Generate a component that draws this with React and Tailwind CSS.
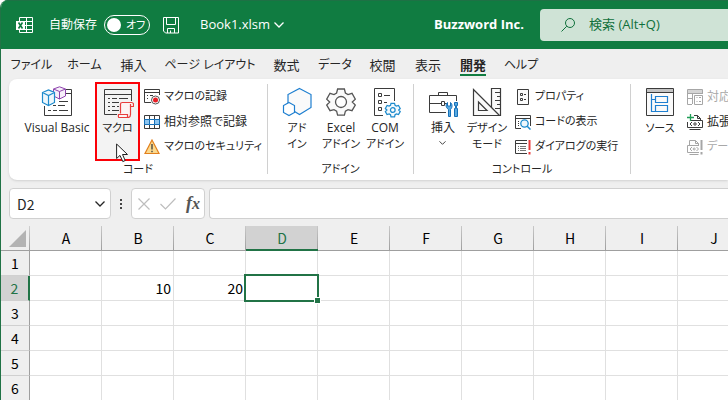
import React, { useState } from 'react';

const COLUMNS = ['A', 'B', 'C', 'D', 'E', 'F', 'G', 'H', 'I', 'J'];
const ROWS = [1, 2, 3, 4, 5, 6];
const VALUES = { B2: 10, C2: 20 };

const TABS = [
  { label: 'ファイル', style: 'w-[55px] text-xs' },
  { label: 'ホーム', style: 'w-[51px] text-xs' },
  { label: '挿入', style: 'w-[47px] text-[13px]' },
  { label: 'ページ レイアウト', style: 'w-[106px] text-xs' },
  { label: '数式', style: 'w-[47px] text-[13px]' },
  { label: 'データ', style: 'w-[50px] text-xs' },
  { label: '校閲', style: 'w-[45px] text-[13px]' },
  { label: '表示', style: 'w-[46px] text-[13px]' },
  { label: '開発', style: 'w-[44px] text-[13px]' },
  { label: 'ヘルプ', style: 'w-[52px] text-xs' }
];

const Icon = ({ size = 16, children, className = '' }) => (
  <svg
    width={size}
    height={size}
    viewBox={`0 0 ${size} ${size}`}
    fill="none"
    stroke="#3b3b3b"
    className={`shrink-0 ${className}`}
    aria-hidden="true"
  >
    {children}
  </svg>
);

const Chevron = ({ className = '' }) => (
  <svg width="10" height="6" viewBox="0 0 10 6" fill="none" stroke="currentColor" strokeWidth="1.3" className={className} aria-hidden="true">
    <path d="M.5.5 5 5 9.5.5" />
  </svg>
);

const GEAR =
  'M10.6 1.5h6.8l1 4 2.6 1.5 4-1.2 3.3 5.8-3 2.9 3 3-3.3 5.7-4-1.1-2.6 1.5-1 4h-6.8l-1-4L7 22.1l-4 1.1L-.3 17.5l3-3-3-2.9L3 5.8 7 7l2.6-1.5z';

const VisualBasicIcon = () => (
  <Icon size={32}>
    <path d="M3.5 20V29.5H30.5V3.5H25M24 7.5H30" />
    <path d="M18 15.5H27M12 19.5H15M17 19.5H24M7 24.5H10M12 24.5H16M18 24.5H27" />
    <g stroke="#8e44ad" fill="#f7effa">
      <path d="M12.5 3 18.5.8 24.5 3V10L18.5 13 12.5 10z" />
      <path d="M12.5 3 18.5 5.5 24.5 3M18.5 5.5V13" />
    </g>
    <g stroke="#1e8bcd" strokeWidth="1.2" fill="#eef7fc">
      <path d="M1.5 6.5 7.5 4 13.5 6.5V16.5L7.5 19.5 1.5 16.5z" />
      <path d="M1.5 6.5 7.5 9.5 13.5 6.5M7.5 9.5V19.5" />
    </g>
  </Icon>
);

const MacroIcon = () => (
  <Icon size={32}>
    <path d="M15 28.5H2.5V3.5H29.5V15M2.5 8.5H29.5" />
    <path d="M6 12.5H8M10 12.5H15M17 12.5H26M6 16.5H8M10 16.5H17M6 20.5H8M10 20.5H13M15 20.5H17M6 24.5H8M10 24.5H17" />
    <g stroke="#e83c3c" strokeWidth="1.2" fill="#fdf3f3">
      <path d="M18.5 27.5V18C18.5 16.5 19 16.5 20.5 16.5H29.5C31 16.5 31.5 17.5 31.5 18.5V20.5H28.5V28.5C28.5 30.5 28 31.5 26 31.5H17C16 31.5 16.5 29 16.5 28.5H25.5V31" />
      <path d="M28.5 20.5V18" />
    </g>
  </Icon>
);

const AddInIcon = () => (
  <Icon size={32}>
    <g stroke="#1e7fd0" strokeWidth="1.2" fill="#fafafa">
      <path d="M18.5 2.5 30 8.5V21.5L18.5 28.5 7 21.5V8.5z" />
      <path d="M8 16.5 13.5 19.5V26.5L8 29.5 2.5 26.5V19.5z" fill="#fff" />
    </g>
  </Icon>
);

const ExcelAddInIcon = () => (
  <Icon size={32}>
    <g transform="translate(2 1.5)" stroke="#555" strokeWidth="1.3" fill="#fafafa">
      <path d={GEAR} />
      <circle cx="14" cy="14.5" r="5.5" fill="#fff" />
    </g>
  </Icon>
);

const ComAddInIcon = () => (
  <Icon size={32}>
    <path d="M14 29.5H5.5V2.5H25.5V15" />
    <path d="M9.5 7.5H12.5V10.5H9.5zM9.5 14.5H12.5V17.5H9.5zM9.5 21.5H12.5V24.5H9.5zM15 9.5H21M15 16.5H18" />
    <g transform="translate(16.5 16.5) scale(.52)" stroke="#1e8bcd" strokeWidth="2.4" fill="#f2f9fd">
      <path d={GEAR} />
      <circle cx="14" cy="14.5" r="4.5" fill="#fff" />
    </g>
  </Icon>
);

const ToolboxIcon = () => (
  <Icon size={32}>
    <path d="M19 26.5H2.5V9.5H29.5V15M11.5 9V6.5H20.5V9M2.5 17.5H14M18 17.5H20" />
    <path d="M14.5 15.5H17.5V19.5H14.5z" fill="#fff" />
    <g stroke="#1670b8" fill="#5aaae0">
      <path d="M21.5 30.5V23.5C18.5 21.5 18.5 18 20.5 16.5V20H23.5V16.5C25.5 18 25.5 21.5 23.5 23.5V30.5z" />
      <path d="M27.5 16.5H30.5V19.5H29.5V22.5H30.5V30.5H27.5V22.5H28.5V19.5H27.5z" />
    </g>
  </Icon>
);

const DesignIcon = () => (
  <Icon size={32}>
    <g strokeWidth="1.2" fill="#fafafa">
      <path d="M20.5 22V2.5H29.5V29.5H27" />
      <path d="M2.5 3.5V29.5H28.5z" />
      <path d="M7.5 16V24.5H16z" />
      <path d="M24 6.5H29M26 10.5H29M24 14.5H29M26 18.5H29M24 22.5H29" />
    </g>
  </Icon>
);

const SourceIcon = () => (
  <Icon size={32}>
    <path d="M2.5 2.5H29.5V29.5H2.5z" fill="#fafafa" />
    <path d="M3 3H29V6H3z" fill="#c4c4c4" stroke="none" />
    <path d="M2.5 6.5H29.5" />
    <path d="M7.5 8V25.5H11M7.5 13.5H11M11.5 10.5H23.5V16.5H11.5zM11.5 19.5H23.5V25.5H11.5z" stroke="#1e7fd0" strokeWidth="1.2" fill="none" />
  </Icon>
);

const RecordIcon = () => (
  <Icon>
    <path d="M7 13.5H.5V.5H15.5V6M.5 3.5H15.5M3 6.5H4M6 6.5H9M3 9.5H4" />
    <circle cx="11.5" cy="11" r="4" fill="#fff" stroke="#555" />
    <circle cx="11.5" cy="11" r="2.5" fill="#e81e25" stroke="none" />
  </Icon>
);

const RelativeIcon = () => (
  <Icon>
    <path d="M.5 1.5H15.5V14.5H.5zM5.5 1.5V14.5M10.5 1.5V14.5" fill="#fff" />
    <path d="M.5 5.5H15.5V10.5H.5z" fill="#8cc4ee" stroke="#1670b8" />
    <path d="M5.5 5.5H10.5V10.5H5.5z" fill="#fff" stroke="#1670b8" />
  </Icon>
);

const WarningIcon = () => (
  <Icon>
    <path d="M8 1 15 14.5H1z" fill="#fbd98d" stroke="#e2801e" strokeWidth="1.2" />
    <path d="M8 5V10.5M8 11.8V13.3" strokeWidth="1.3" />
  </Icon>
);

const PropertyIcon = () => (
  <Icon>
    <path d="M2.5.5H13.5V15.5H2.5z" fill="#fafafa" />
    <path d="M5.5 4.5H7.5V6.5H5.5zM5.5 9.5H7.5V11.5H5.5zM9 5.5H11M9 10.5H11" />
  </Icon>
);

const CodeIcon = () => (
  <Icon>
    <path d="M6 14.5H.5V1.5H15.5V12M.5 4.5H15.5M3 7.5H4M3 9.5H4M3 11.5H4" />
    <circle cx="9.5" cy="9.5" r="3.7" fill="#eef7fc" stroke="#1e8bcd" strokeWidth="1.3" />
    <path d="M12.2 12.2 15.5 15.5" stroke="#1e8bcd" strokeWidth="1.5" />
  </Icon>
);

const DialogIcon = () => (
  <Icon>
    <path d="M12 14.5H.5V1.5H12M.5 4.5H12" />
    <path d="M3 7.5H4M5 7.5H11M3 9.5H4M5 9.5H11M3 11.5H4M5 11.5H11" stroke="#777" />
    <path d="M14.5 1V11M14.5 13V15.5" stroke="#e83c3c" strokeWidth="2" />
  </Icon>
);

const MapIcon = () => (
  <Icon>
    <g stroke="#a6a6a6">
      <path d="M5 15.5H.5V.5H15.5V5M.5 4.5H15.5M5.5.5V15M10.5.5V4M.5 9.5H5" />
      <path d="M1 1H15V4H1z" fill="#d5d5d5" stroke="none" />
      <path d="M7.5 6.5H15.5V15.5H7.5zM9.5 8.5H10.5M12 8.5H14M9.5 12.5H10.5M12 12.5H14" />
    </g>
  </Icon>
);

const ExpansionIcon = () => (
  <Icon>
    <path d="M7 1.5H10.5L13.5 4.5V6M10.5 1.5V4.5H13.5M2.5 15.5H13.5" />
    <path d="M3 6.5H15.5V13.5H.5V8" />
    <path d="M5 8 3 10 5 12M11 8 13 10 11 12" />
    <circle cx="8" cy="10" r="1.2" />
    <path d="M3.5 0V7M0 3.5H7" stroke="#1f9d55" strokeWidth="1.3" />
  </Icon>
);

const RefreshIcon = () => (
  <Icon>
    <g stroke="#a6a6a6">
      <path d="M2.5 6V1.5H8.5L11.5 4.5V6M8.5 1.5V4.5H11.5M2.5 15.5H11.5M12 6.5H.5V13.5H12" />
      <path d="M5 8 3 10 5 12M9.5 8 11.5 10 9.5 12" />
      <circle cx="7.2" cy="10" r="1" />
      <path d="M14.5 1V11M14.5 13V15.5" strokeWidth="2" />
    </g>
  </Icon>
);

const LargeButton = ({ icon, lines, width = 'w-11', dropdown = false }) => (
  <button type="button" className={`flex h-[79px] shrink-0 flex-col items-center pt-1 ${width}`}>
    {icon}
    <span className="mt-[2px] flex flex-col items-center whitespace-nowrap">
      {lines.map(line => (
        <span key={line} className={`leading-4 ${/[A-Za-z挿]/.test(line) ? 'text-xs' : 'text-[11px]'}`}>
          {line}
        </span>
      ))}
      {dropdown && <Chevron className="mt-[5px] h-1 w-[7px]" />}
    </span>
  </button>
);

const SmallButton = ({ icon, label, size = 'text-[11px]', disabled = false }) => (
  <button
    type="button"
    disabled={disabled}
    className={`flex h-[25px] items-center gap-1 whitespace-nowrap disabled:text-[#a8a8a8] ${size}`}
  >
    {icon}
    {label}
  </button>
);

const Group = ({ label, width, padding, children }) => (
  <section aria-label={label} className={`flex shrink-0 flex-col ${width}`}>
    <div className={`flex h-[79px] items-start ${padding}`}>{children}</div>
    {label && <div className="text-center text-[11px] leading-4">{label}</div>}
  </section>
);

const Separator = () => <div className="mt-[2px] mb-[3px] w-px shrink-0 bg-[#d0d0d0]" />;

const TitleBar = () => {
  const [autoSave, setAutoSave] = useState(false);

  return (
    <header className="flex h-[49px] shrink-0 items-center border-t border-[#1e7145] bg-[#107c41] pl-[15px] text-white">
      <svg width="17" height="17" viewBox="0 0 17 17" fill="none" stroke="#fff" aria-hidden="true" className="shrink-0">
        <path d="M3.5 4V.5H16.5V15.5H3.5V13M3.5 4.5H16.5M9 8.5H16.5M9 12.5H16.5M10.5.5V15.5" />
        <path d="M0 4H9V13H0z" fill="#fff" stroke="none" />
        <path d="M2.5 5.5 6.5 11.5M6.5 5.5 2.5 11.5" stroke="#107c41" strokeWidth="1.6" />
      </svg>
      <label htmlFor="autosave" className="ml-4 shrink-0 text-xs">自動保存</label>
      <label className="ml-[7px] flex h-5 w-[46px] shrink-0 items-center gap-[5px] rounded-full border border-white pl-[2px]">
        <input
          id="autosave"
          type="checkbox"
          role="switch"
          checked={autoSave}
          onChange={e => setAutoSave(e.target.checked)}
          className="size-[14px] appearance-none rounded-full bg-white"
        />
        <span className="text-[11px]">オフ</span>
      </label>
      <button type="button" aria-label="上書き保存" className="ml-[13px] shrink-0">
        <svg width="16" height="17" viewBox="0 0 16 17" fill="none" stroke="#fff" aria-hidden="true">
          <path d="M.5.5H15.5V16H2.5L.5 14zM3.5.5V7.5H12.5V.5M4.5 16V11.5H11.5V16M7.5 16V13.5" />
        </svg>
      </button>
      <button type="button" className="ml-[21px] flex w-[84px] shrink-0 items-center justify-between whitespace-nowrap text-[13px]">
        Book1.xlsm
        <Chevron />
      </button>
      <div className="ml-[150px] w-[94px] shrink-0 whitespace-nowrap text-[13px] font-bold">Buzzword Inc.</div>
      <label className="ml-3 flex h-8 min-w-0 flex-1 items-center gap-[14px] rounded-l bg-[#cfe3d6] pl-[21px] text-[#0f703b]">
        <svg width="14" height="14" viewBox="0 0 14 14" fill="none" stroke="currentColor" aria-label="検索" className="shrink-0">
          <circle cx="9" cy="5" r="4.5" />
          <path d="M5.8 8.2.5 13.5" />
        </svg>
        <input
          type="search"
          placeholder="検索 (Alt+Q)"
          className="w-full min-w-0 bg-transparent text-[13px] outline-none placeholder:text-[#0f703b]"
        />
      </label>
    </header>
  );
};

const RibbonTabs = () => {
  const [active, setActive] = useState('開発');

  return (
    <nav className="flex h-[30px] shrink-0 pl-[3px]">
      {TABS.map(tab => (
        <button
          key={tab.label}
          type="button"
          onClick={() => setActive(tab.label)}
          className={`flex shrink-0 justify-center whitespace-nowrap pt-[6px] ${tab.style}`}
        >
          <span
            className={`h-[21px] border-b-2 leading-5 ${
              active === tab.label ? 'border-[#107c41] font-bold' : 'border-transparent'
            }`}
          >
            {tab.label}
          </span>
        </button>
      ))}
    </nav>
  );
};

const Ribbon = () => (
  <div className="ml-2 flex shrink-0 overflow-hidden rounded-l-lg bg-white py-[3px] text-xs shadow-sm">
    <Group label="コード" width="w-[258px]" padding="pl-[10px]">
      <LargeButton icon={<VisualBasicIcon />} lines={['Visual Basic']} width="w-[76px]" />
      <div className="relative bg-[#f3f3f3] outline-2 -outline-offset-2 outline-[#fb0007]">
        <LargeButton icon={<MacroIcon />} lines={['マクロ']} width="w-[45px]" />
        <svg width="13" height="20" viewBox="0 0 13 20" className="absolute top-[61px] left-[21px]" aria-hidden="true">
          <path d="M.6 1V15.5L4 12.4 6.8 18.6 9.2 17.5 6.5 11.5H11.5z" fill="#fff" stroke="#222" />
        </svg>
      </div>
      <div className="ml-1 pt-[2px]">
        <SmallButton icon={<RecordIcon />} label="マクロの記録" />
        <SmallButton icon={<RelativeIcon />} label="相対参照で記録" size="text-xs" />
        <SmallButton icon={<WarningIcon />} label="マクロのセキュリティ" />
      </div>
    </Group>
    <Separator />
    <Group label="アドイン" width="w-[145px]" padding="pl-[7px]">
      <LargeButton icon={<AddInIcon />} lines={['アド', 'イン']} />
      <LargeButton icon={<ExcelAddInIcon />} lines={['Excel', 'アドイン']} />
      <LargeButton icon={<ComAddInIcon />} lines={['COM', 'アドイン']} />
    </Group>
    <Separator />
    <Group label="コントロール" width="w-[216px]" padding="pl-[7px]">
      <LargeButton icon={<ToolboxIcon />} lines={['挿入']} dropdown />
      <LargeButton icon={<DesignIcon />} lines={['デザイン', 'モード']} />
      <div className="ml-[6px] pt-[2px]">
        <SmallButton icon={<PropertyIcon />} label="プロパティ" />
        <SmallButton icon={<CodeIcon />} label="コードの表示" />
        <SmallButton icon={<DialogIcon />} label="ダイアログの実行" />
      </div>
    </Group>
    <Separator />
    <Group width="w-[160px]" padding="pl-[7px]">
      <LargeButton icon={<SourceIcon />} lines={['ソース']} />
      <div className="ml-[5px] pt-[2px]">
        <SmallButton icon={<MapIcon />} label="対応付けのプロパティ" size="text-xs" disabled />
        <SmallButton icon={<ExpansionIcon />} label="拡張パック" size="text-xs" />
        <SmallButton icon={<RefreshIcon />} label="データの更新" disabled />
      </div>
    </Group>
  </div>
);

const FormulaBar = ({ selected }) => (
  <div className="mt-2 flex h-[31px] shrink-0 pl-2">
    <div className="flex w-[102px] shrink-0 items-center rounded border border-[#d0d0d0] bg-white pr-[5px] pl-[7px]">
      <input
        aria-label="名前ボックス"
        value={selected}
        readOnly
        className="w-full min-w-0 font-['Noto_Sans_CJK_JP',sans-serif] text-sm outline-none"
      />
      <button type="button" aria-label="名前の一覧">
        <Chevron />
      </button>
    </div>
    <svg width="20" height="31" viewBox="0 0 20 31" fill="#444" className="shrink-0" aria-hidden="true">
      <path d="M9 11h2v2H9zM9 15h2v2H9zM9 19h2v2H9z" />
    </svg>
    <div className="flex w-[74px] shrink-0 items-center rounded border border-[#d0d0d0] bg-white pl-[6px]">
      <button type="button" aria-label="キャンセル">
        <svg width="12" height="12" viewBox="0 0 12 12" fill="none" stroke="#bdbdbd" strokeWidth="1.2" aria-hidden="true">
          <path d="M.5.5 11.5 11.5M11.5.5.5 11.5" />
        </svg>
      </button>
      <button type="button" aria-label="入力" className="ml-[10px]">
        <svg width="16" height="12" viewBox="0 0 16 12" fill="none" stroke="#bdbdbd" strokeWidth="1.2" aria-hidden="true">
          <path d="M.5 6 5.5 11 15.5.5" />
        </svg>
      </button>
      <button type="button" className="ml-[10px] font-['Liberation_Serif',serif] text-lg leading-5 font-bold text-[#555] italic">
        f<span className="text-base">x</span>
      </button>
    </div>
    <input aria-label="数式バー" className="ml-1 min-w-0 flex-1 rounded-l border border-r-0 border-[#d0d0d0] bg-white px-2 text-sm outline-none" />
  </div>
);

const Sheet = ({ selected, onSelect }) => {
  const selectedColumn = selected[0];
  const selectedRow = Number(selected.slice(1));

  return (
    <div className="mt-[7px] min-h-0 flex-1 overflow-hidden">
      <table className="w-[749px] table-fixed border-separate border-spacing-0 font-['Noto_Sans_CJK_JP',sans-serif] text-sm text-black">
        <thead>
          <tr className="h-[25px]">
            <th className="w-[29px] border-b border-[#9f9f9f] bg-[linear-gradient(#d0d0d0,#9f9f9f)] bg-[length:1px_100%] bg-right bg-no-repeat p-0">
              <button type="button" aria-label="すべて選択" className="ml-2 block">
                <svg width="17" height="17" viewBox="0 0 17 17" fill="#b3b3b3" aria-hidden="true">
                  <path d="M17 0V17H0z" />
                </svg>
              </button>
            </th>
            {COLUMNS.map(column => (
              <th
                key={column}
                scope="col"
                className={`w-[72px] bg-[linear-gradient(#c8c8c8,#9f9f9f)] bg-[length:1px_100%] bg-right bg-no-repeat p-0 leading-5 font-normal ${
                  column === selectedColumn
                    ? 'border-b-2 border-[#217346] bg-[#d2d2d2] text-[#217346]'
                    : 'border-b border-[#9f9f9f]'
                }`}
              >
                {column}
              </th>
            ))}
          </tr>
        </thead>
        <tbody>
          {ROWS.map(row => (
            <tr key={row} className="h-[25px]">
              <th
                scope="row"
                className={`border-b border-b-[#d0d0d0] p-0 leading-5 font-normal ${
                  row === selectedRow
                    ? 'border-r-2 border-r-[#217346] bg-[#d2d2d2] text-[#217346]'
                    : 'border-r border-r-[#9f9f9f]'
                }`}
              >
                {row}
              </th>
              {COLUMNS.map(column => {
                const id = `${column}${row}`;
                return (
                  <td
                    key={id}
                    onClick={() => onSelect(id)}
                    className="relative border-r border-b border-[#e0e0e0] bg-white p-0 pr-[2px] text-right leading-5"
                  >
                    {VALUES[id]}
                    {id === selected && (
                      <span className="absolute -top-[2px] -right-[2px] -bottom-[2px] -left-[2px] z-10 border-2 border-[#217346]">
                        <span className="absolute -right-[4px] -bottom-[4px] size-[7px] border border-white bg-[#217346]" />
                      </span>
                    )}
                  </td>
                );
              })}
            </tr>
          ))}
        </tbody>
      </table>
    </div>
  );
};

const App = () => {
  const [selected, setSelected] = useState('D2');

  return (
    <div className="flex h-screen flex-col overflow-hidden rounded-tl-lg border-l border-[#217346] bg-[#efefef] font-['Open_Sans','Noto_Sans_CJK_JP',sans-serif] text-[#262626] [font-feature-settings:'palt']">
      <TitleBar />
      <RibbonTabs />
      <Ribbon />
      <FormulaBar selected={selected} />
      <Sheet selected={selected} onSelect={setSelected} />
    </div>
  );
};

export default App;
